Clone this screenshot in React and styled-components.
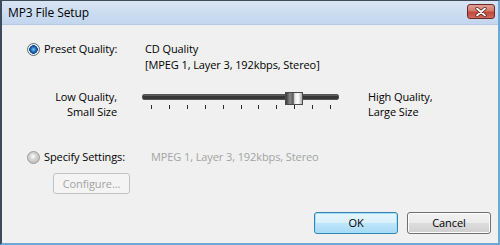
import React from "react";
import styled, { createGlobalStyle } from "styled-components";

const Global = createGlobalStyle`
  html, body { margin: 0; padding: 0; background: #f0f0f0; }
  body { font-family: "Open Sans", "Noto Sans", sans-serif; font-size: 11px; letter-spacing: -0.1px; color: #000; }
`;

const Window = styled.div`
  width: 500px;
  height: 245px;
  box-sizing: border-box;
  border-left: 2px solid #3d4a5a;
  border-top: 1px solid #3d4a5a;
  border-right: 2px solid #6aa9d8;
  border-bottom: 2px solid #6aa9d8;
  display: flex;
  flex-direction: column;
  background: #f0f0f0;
  overflow: hidden;
`;

const TitleBar = styled.div`
  height: 23px;
  flex: none;
  display: flex;
  align-items: center;
  justify-content: space-between;
  padding: 0 3px 0 6px;
  background: linear-gradient(#d7e4f4, #c2d6ee);
  border-bottom: 1px solid #b6c9e2;
`;

const Title = styled.span`
  font-size: 12px;
  color: #000;
  margin-top: -1px;
`;

const CloseBtn = styled.div`
  width: 28px;
  height: 15px;
  box-sizing: border-box;
  border: 1px solid #6d2a24;
  border-radius: 3px;
  background: linear-gradient(#e0a196 0%, #d27a6c 45%, #c1473a 55%, #cf6a5c 100%);
  display: flex;
  align-items: center;
  justify-content: center;
  margin-top: -2px;
`;

const Body = styled.div`
  flex: 1;
  display: flex;
  flex-direction: column;
  padding: 16px 7px 0 25px;
  line-height: 16px;
`;

const Row = styled.div`
  display: flex;
  align-items: flex-start;
`;

const RadioLabel = styled.label`
  width: 118px;
  flex: none;
  display: flex;
  align-items: center;
  gap: 4px;
`;

const Radio = styled.span`
  width: 13px;
  height: 13px;
  box-sizing: border-box;
  border-radius: 50%;
  border: 1px solid ${(p) => (p.$checked ? "#5b6c7c" : "#9a9a9a")};
  background: ${(p) =>
    p.$checked
      ? "radial-gradient(circle at 50% 50%, #7fc6f5 0, #1c6fbf 2.5px, #0c3f7a 4px, #e8e8e8 4.5px, #f8f8f8 6px)"
      : "radial-gradient(circle at 45% 40%, #ffffff 0, #d7d7d7 3px, #c4c4c4 6px)"};
  flex: none;
`;

const Values = styled.div`
  display: flex;
  flex-direction: column;
  padding-left: ${(p) => p.$indent || 0}px;
  color: ${(p) => (p.$disabled ? "#a3a3a3" : "#000")};
`;

const SliderRow = styled.div`
  display: flex;
  align-items: flex-start;
  margin-top: 16px;
  line-height: 15px;
`;

const SideLabel = styled.div`
  width: ${(p) => p.$w}px;
  flex: none;
  text-align: ${(p) => p.$align};
`;

const Slider = styled.div`
  position: relative;
  width: 197px;
  height: 22px;
  margin: 0 29px 0 25px;
  flex: none;
`;

const Track = styled.div`
  position: absolute;
  left: 0;
  right: 0;
  top: 5px;
  height: 6px;
  border-radius: 2px;
  background: linear-gradient(#6d6d6d, #333 40%, #3a3a3a);
  border: 1px solid #555;
  box-sizing: border-box;
`;

const Thumb = styled.div`
  position: absolute;
  top: 3px;
  width: 18px;
  height: 13px;
  box-sizing: border-box;
  border: 1px solid #4a4a4a;
  background: linear-gradient(90deg, #3a3a3a 0%, #8a8a8a 25%, #595959 45%, #e6e6e6 55%, #ffffff 75%, #b0b0b0 100%);
`;

const Tick = styled.div`
  position: absolute;
  top: 16px;
  width: 1px;
  height: 4px;
  background: #2a2a2a;
`;

const SpecifyRow = styled(Row)`
  margin-top: 30px;
`;

const Configure = styled.div`
  margin: 8px 0 0 26px;
  width: 77px;
  height: 21px;
  box-sizing: border-box;
  border: 1px solid #c2c2c2;
  border-radius: 3px;
  background: #f4f4f4;
  color: #a3a3a3;
  display: flex;
  align-items: center;
  justify-content: center;
`;

const Footer = styled.div`
  display: flex;
  justify-content: flex-end;
  gap: 9px;
  margin-top: 18px;
`;

const Button = styled.div`
  width: 84px;
  height: 22px;
  box-sizing: border-box;
  border-radius: 3px;
  display: flex;
  align-items: center;
  justify-content: center;
  border: 1px solid ${(p) => (p.$default ? "#3c7fb1" : "#707070")};
  background: ${(p) =>
    p.$default
      ? "linear-gradient(#e8f5fc 0%, #d9f0fc 50%, #bee6fd 51%, #a7d9f5 100%)"
      : "linear-gradient(#f2f2f2 0%, #ebebeb 50%, #dddddd 51%, #cfcfcf 100%)"};
  box-shadow: inset 0 0 0 1px ${(p) => (p.$default ? "#9ee3fb" : "#fcfcfc")};
`;

const ticks = Array.from({ length: 11 }, (_, i) => Math.round(9 + i * 17.9));

export default function App() {
  return (
    <>
      <Global />
      <Window>
        <TitleBar>
          <Title>MP3 File Setup</Title>
          <CloseBtn>
            <svg width="12" height="10" viewBox="0 0 12 10">
              <path d="M2 1.5 L10 8.5 M10 1.5 L2 8.5" stroke="#4a1a14" strokeWidth="3.2" strokeLinecap="round" />
              <path d="M2 1.5 L10 8.5 M10 1.5 L2 8.5" stroke="#ffffff" strokeWidth="1.8" strokeLinecap="round" />
            </svg>
          </CloseBtn>
        </TitleBar>
        <Body>
          <Row>
            <RadioLabel>
              <Radio $checked />
              Preset Quality:
            </RadioLabel>
            <Values>
              <span>CD Quality</span>
              <span>[MPEG 1, Layer 3, 192kbps, Stereo]</span>
            </Values>
          </Row>
          <SliderRow>
            <SideLabel $w={90} $align="right">
              Low Quality,
              <br />
              Small Size
            </SideLabel>
            <Slider>
              <Track />
              {ticks.map((x) => (
                <Tick key={x} style={{ left: x }} />
              ))}
              <Thumb style={{ left: 143 }} />
            </Slider>
            <SideLabel $w={110} $align="left">
              High Quality,
              <br />
              Large Size
            </SideLabel>
          </SliderRow>
          <SpecifyRow>
            <RadioLabel>
              <Radio />
              Specify Settings:
            </RadioLabel>
            <Values $indent={6} $disabled>
              <span>MPEG 1, Layer 3, 192kbps, Stereo</span>
            </Values>
          </SpecifyRow>
          <Configure>Configure...</Configure>
          <Footer>
            <Button $default>OK</Button>
            <Button>Cancel</Button>
          </Footer>
        </Body>
      </Window>
    </>
  );
}
